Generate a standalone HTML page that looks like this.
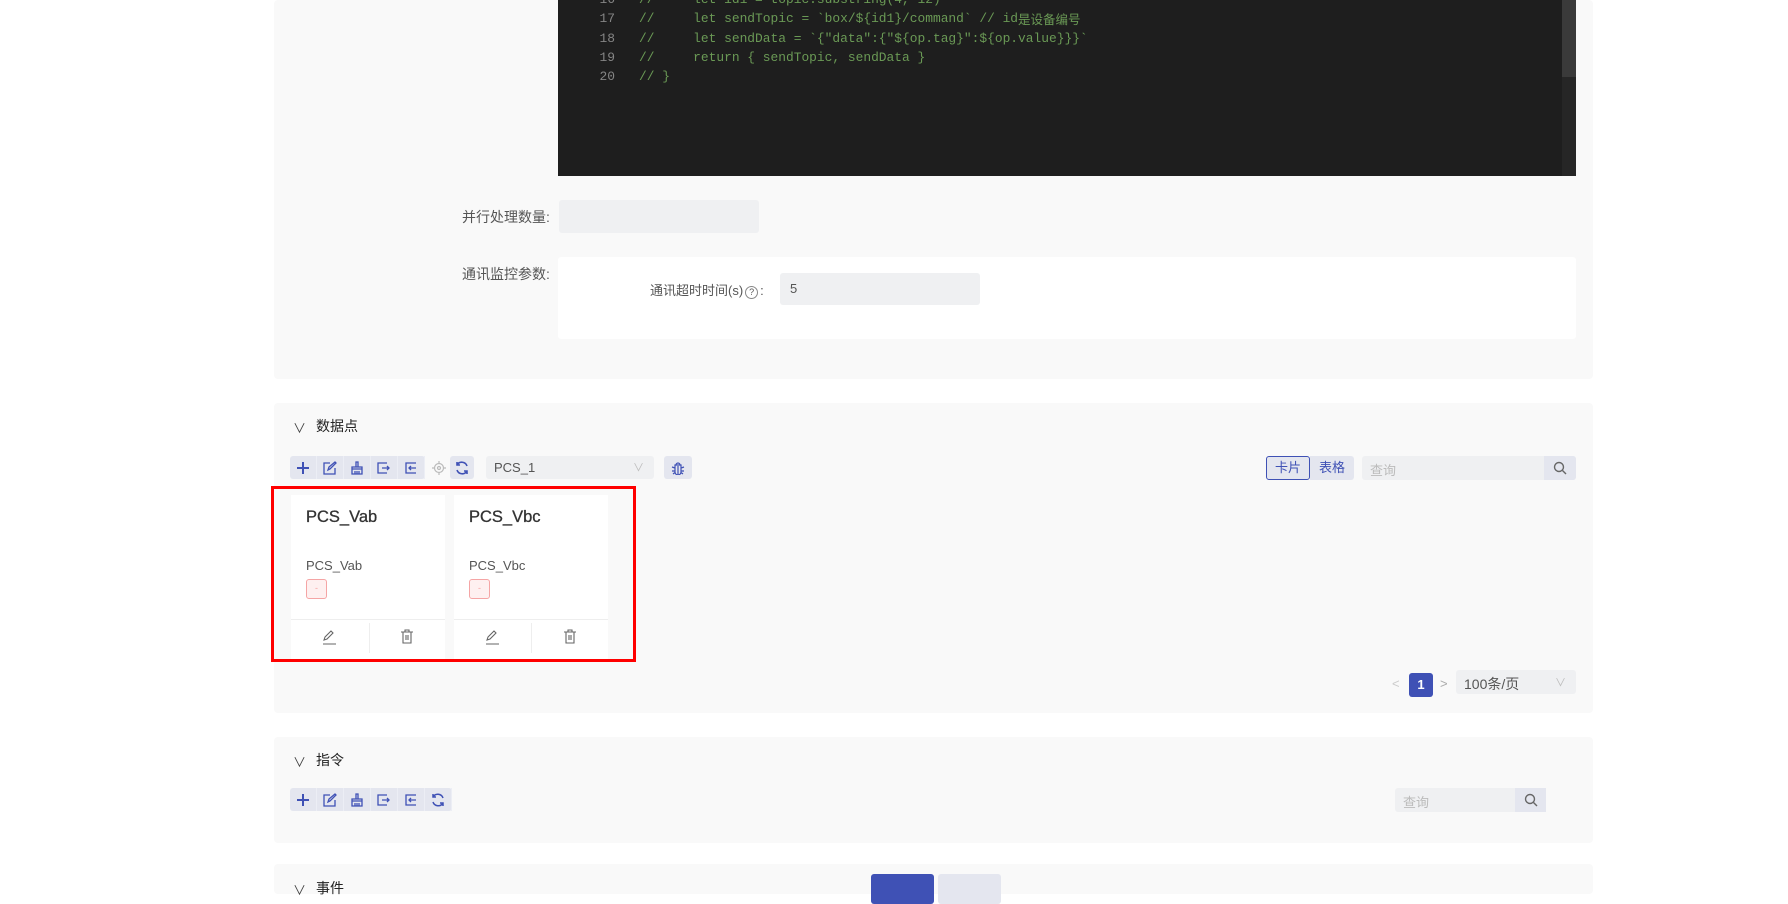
<!DOCTYPE html>
<html><head><meta charset="utf-8"><style>
*{box-sizing:border-box;margin:0;padding:0}
body{width:1788px;height:885px;overflow:hidden;background:#fff;font-family:"Liberation Sans","Noto Sans CJK SC",sans-serif;color:#333;position:relative;font-size:14px}
.abs{position:absolute}
.panel{position:absolute;left:274px;width:1319px;background:#f9f9f9;border-radius:4px}
.code{left:558px;top:0;width:1018px;height:176px;background:#1e1e1e;font-family:"Liberation Mono",monospace;font-size:12.9px;color:#6a9955}
.ln{position:absolute;left:0;width:57px;text-align:right;color:#858585;line-height:18px;height:18px}
.cl{position:absolute;left:81px;white-space:pre;line-height:18px;height:18px}
.inp{position:absolute;background:#eff0f2;border-radius:3px}
.lbl{position:absolute;font-size:14px;color:#555}
.tb{position:absolute;height:23px;background:#e4e6ef;border-radius:3px;display:flex}
.tb span{width:27px;height:23px;display:flex;align-items:center;justify-content:center;border-right:1px solid #eceef5}
.card{position:absolute;top:495px;width:154px;height:165px;background:#fff}
.card .t{position:absolute;left:15px;top:13px;font-size:16.5px;color:#333;-webkit-text-stroke:.3px #333}
.card .n{position:absolute;left:15px;top:63px;font-size:13px;color:#555}
.card .tag{position:absolute;left:15px;top:84px;width:21px;height:20px;border:1px solid #f5a5a5;background:#fef0f0;border-radius:3px;color:#f5a5a5;font-size:9px;text-align:center;line-height:17px}
.card .d{position:absolute;left:0;right:0;top:124px;border-top:1px solid #eee}
</style></head><body>

<div class="panel" style="top:0;height:379px"></div>
<div class="abs code">
<div class="ln" style="top:-9px">16</div><div class="cl" style="top:-9px">//     let id1 = topic.substring(4, 12)</div>
<div class="ln" style="top:10px">17</div><div class="cl" style="top:10px">//     let sendTopic = `box/${id1}/command` // id<span style="font-family:'Noto Sans CJK SC',sans-serif;font-size:12.5px;line-height:18px;vertical-align:top">是设备编号</span></div>
<div class="ln" style="top:30px">18</div><div class="cl" style="top:30px">//     let sendData = `{"data":{"${op.tag}":${op.value}}}`</div>
<div class="ln" style="top:49px">19</div><div class="cl" style="top:49px">//     return { sendTopic, sendData }</div>
<div class="ln" style="top:68px">20</div><div class="cl" style="top:68px">// }</div>
<div class="abs" style="right:0;top:0;width:14px;height:77px;background:#3a3a3a"></div>
<div class="abs" style="right:0;top:77px;width:14px;height:99px;background:#262626"></div>
</div>
<div class="lbl" style="left:462px;top:207px">并行处理数量:</div>
<div class="inp" style="left:559px;top:200px;width:200px;height:33px"></div>
<div class="lbl" style="left:462px;top:264px">通讯监控参数:</div>
<div class="abs" style="left:558px;top:257px;width:1018px;height:82px;background:#fff;border-radius:3px"></div>
<div class="lbl" style="left:650px;top:280px;font-size:13px">通讯超时时间(s)<span style="display:inline-block;width:13px;height:13px;border:1px solid #888;border-radius:50%;font-size:9px;text-align:center;line-height:11px;margin:0 2px">?</span>:</div>
<div class="inp" style="left:780px;top:273px;width:200px;height:32px;padding:8px 10px;font-size:13px;color:#555">5</div>

<div class="panel" style="top:403px;height:310px"></div>
<div class="abs" style="left:293px;top:418px;font-size:13px;color:#444">∨</div>
<div class="abs" style="left:316px;top:416px;font-size:14px;color:#222">数据点</div>
<div class="tb" style="left:290px;top:456px">
<span><svg width="14" height="14"><path d="M7 1v12M1 7h12" stroke="#3f51b5" stroke-width="2"/></svg></span>
<span><svg width="14" height="14" fill="none" stroke="#3f51b5" stroke-width="1.3"><path d="M12 7v6H1V2h6M5 9l1-3 6-5 1 1-6 6z"/></svg></span>
<span><svg width="14" height="14" fill="none" stroke="#3f51b5" stroke-width="1.3"><path d="M6 1h2v5H6zM2 6h10v2H2zM2 8v5h10V8M5 10v3M7 10v3M9 10v3"/></svg></span>
<span><svg width="14" height="14" fill="none" stroke="#3f51b5" stroke-width="1.3"><path d="M10 2H1v10h9M5 7h7M10 5l2 2-2 2"/></svg></span>
<span><svg width="14" height="14" fill="none" stroke="#3f51b5" stroke-width="1.3"><path d="M12 2H2v10h10M12 7H5M7 5L5 7l2 2"/></svg></span>
</div>
<div class="abs" style="left:432px;top:461px"><svg width="14" height="14" fill="none" stroke="#bbb" stroke-width="1.2"><circle cx="7" cy="7" r="4.5"/><circle cx="7" cy="7" r="1.5"/><path d="M7 0v2.5M7 11.5V14M0 7h2.5M11.5 7H14"/></svg></div>
<div class="tb" style="left:450px;top:456px;width:24px;justify-content:center;align-items:center"><svg width="16" height="16" fill="none" stroke="#3f51b5" stroke-width="1.6"><path d="M13 6A5.5 5.5 0 0 0 3 5M3 10a5.5 5.5 0 0 0 10 1M3 2v3h3M13 14v-3h-3"/></svg></div>
<div class="inp" style="left:486px;top:456px;width:168px;height:23px;padding:4px 8px;font-size:13px;color:#555">PCS_1<span style="position:absolute;right:10px;top:3px;color:#bbb;font-size:11px">∨</span></div>
<div class="tb" style="left:664px;top:456px;width:28px;justify-content:center;align-items:center"><svg width="14" height="14" fill="none" stroke="#3f51b5" stroke-width="1.2"><path d="M4 4h6v7a3 3 0 0 1-6 0zM5 4a2 2 0 0 1 4 0M1 6l3 1M13 6l-3 1M1 10h3M13 10h-3M2 13l2-1.5M12 13l-2-1.5M7 5v9"/></svg></div>

<div class="abs" style="left:1266px;top:456px;width:44px;height:24px;border:1px solid #3f51b5;border-radius:3px;background:#e4e6ef;color:#3f51b5;font-size:13px;text-align:center;line-height:22px">卡片</div>
<div class="abs" style="left:1310px;top:456px;width:44px;height:24px;background:#e4e6ef;border-radius:0 3px 3px 0;color:#3f51b5;font-size:13px;text-align:center;line-height:24px">表格</div>
<div class="inp" style="left:1362px;top:456px;width:214px;height:24px;padding:4px 8px;color:#bbb;font-size:13px">查询</div>
<div class="abs" style="left:1544px;top:456px;width:32px;height:24px;background:#e4e6ef;display:flex;align-items:center;justify-content:center;border-radius:0 3px 3px 0"><svg width="14" height="14" fill="none" stroke="#666" stroke-width="1.4"><circle cx="6" cy="6" r="4.5"/><path d="M9.5 9.5L13 13"/></svg></div>

<div class="card" style="left:291px"><div class="t">PCS_Vab</div><div class="n">PCS_Vab</div><div class="tag">-</div><div class="d"></div>
<svg class="abs" style="left:30px;top:134px" width="16" height="16" fill="none" stroke="#666" stroke-width="1.1"><path d="M3 11l1-3 6-6 2 2-6 6zM2 15h13"/></svg>
<div class="abs" style="left:78px;top:128px;width:1px;height:30px;background:#eee"></div>
<svg class="abs" style="left:108px;top:133px" width="16" height="16" fill="none" stroke="#666" stroke-width="1.1"><path d="M2 4h12M6 4V2h4v2M4 4v11h8V4M7 7v5M9 7v5"/></svg>
</div>
<div class="card" style="left:454px"><div class="t">PCS_Vbc</div><div class="n">PCS_Vbc</div><div class="tag">-</div><div class="d"></div>
<svg class="abs" style="left:30px;top:134px" width="16" height="16" fill="none" stroke="#666" stroke-width="1.1"><path d="M3 11l1-3 6-6 2 2-6 6zM2 15h13"/></svg>
<div class="abs" style="left:77px;top:128px;width:1px;height:30px;background:#eee"></div>
<svg class="abs" style="left:108px;top:133px" width="16" height="16" fill="none" stroke="#666" stroke-width="1.1"><path d="M2 4h12M6 4V2h4v2M4 4v11h8V4M7 7v5M9 7v5"/></svg>
</div>
<div class="abs" style="left:271px;top:486px;width:365px;height:176px;border:3px solid #f00"></div>

<div class="abs" style="left:1392px;top:676px;color:#ccc;font-size:13px">&lt;</div>
<div class="abs" style="left:1409px;top:673px;width:24px;height:24px;background:#3f51b5;color:#fff;border-radius:3px;font-size:13px;font-weight:bold;text-align:center;line-height:24px">1</div>
<div class="abs" style="left:1440px;top:676px;color:#aaa;font-size:13px">&gt;</div>
<div class="inp" style="left:1456px;top:670px;width:120px;height:24px;padding:4px 8px;font-size:14px;color:#555">100条/页<span style="position:absolute;right:10px;top:4px;color:#bbb;font-size:11px">∨</span></div>

<div class="panel" style="top:737px;height:106px"></div>
<div class="abs" style="left:293px;top:752px;font-size:13px;color:#444">∨</div>
<div class="abs" style="left:316px;top:750px;font-size:14px;color:#222">指令</div>
<div class="tb" style="left:290px;top:788px">
<span><svg width="14" height="14"><path d="M7 1v12M1 7h12" stroke="#3f51b5" stroke-width="2"/></svg></span>
<span><svg width="14" height="14" fill="none" stroke="#3f51b5" stroke-width="1.3"><path d="M12 7v6H1V2h6M5 9l1-3 6-5 1 1-6 6z"/></svg></span>
<span><svg width="14" height="14" fill="none" stroke="#3f51b5" stroke-width="1.3"><path d="M6 1h2v5H6zM2 6h10v2H2zM2 8v5h10V8M5 10v3M7 10v3M9 10v3"/></svg></span>
<span><svg width="14" height="14" fill="none" stroke="#3f51b5" stroke-width="1.3"><path d="M10 2H1v10h9M5 7h7M10 5l2 2-2 2"/></svg></span>
<span><svg width="14" height="14" fill="none" stroke="#3f51b5" stroke-width="1.3"><path d="M12 2H2v10h10M12 7H5M7 5L5 7l2 2"/></svg></span>
<span><svg width="16" height="16" fill="none" stroke="#3f51b5" stroke-width="1.5"><path d="M13 6A5.5 5.5 0 0 0 3 5M3 10a5.5 5.5 0 0 0 10 1M3 2v3h3M13 14v-3h-3"/></svg></span>
</div>
<div class="inp" style="left:1395px;top:788px;width:151px;height:24px;padding:4px 8px;color:#bbb;font-size:13px">查询</div>
<div class="abs" style="left:1515px;top:788px;width:31px;height:24px;background:#e4e6ef;display:flex;align-items:center;justify-content:center"><svg width="14" height="14" fill="none" stroke="#666" stroke-width="1.4"><circle cx="6" cy="6" r="4.5"/><path d="M9.5 9.5L13 13"/></svg></div>

<div class="panel" style="top:864px;height:30px"></div>
<div class="abs" style="left:293px;top:880px;font-size:13px;color:#444">∨</div>
<div class="abs" style="left:316px;top:878px;font-size:14px;color:#222">事件</div>
<div class="abs" style="left:871px;top:874px;width:63px;height:30px;background:#3f51b5;border-radius:3px"></div>
<div class="abs" style="left:938px;top:874px;width:63px;height:30px;background:#e4e6ef;border-radius:3px"></div>
</body></html>
